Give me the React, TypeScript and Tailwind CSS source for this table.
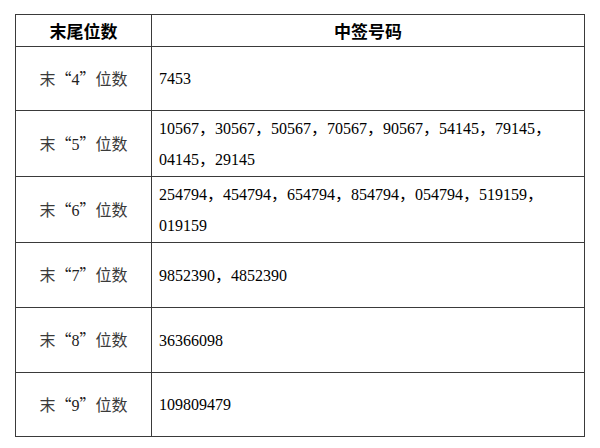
import React from "react";

interface Row {
  digit: string;
  numbers: string;
  height: string;
}

const rows: Row[] = [
  { digit: "4", numbers: "7453", height: "h-[64px]" },
  {
    digit: "5",
    numbers: "10567，30567，50567，70567，90567，54145，79145，04145，29145",
    height: "h-[66px]",
  },
  {
    digit: "6",
    numbers: "254794，454794，654794，854794，054794，519159，019159",
    height: "h-[66px]",
  },
  { digit: "7", numbers: "9852390，4852390", height: "h-[65px]" },
  { digit: "8", numbers: "36366098", height: "h-[65px]" },
  { digit: "9", numbers: "109809479", height: "h-[64px]" },
];

const serif = "font-['Liberation_Serif','Noto_Sans_CJK_SC',serif]";
const cjk = "font-['Noto_Sans_CJK_SC',sans-serif]";

export default function App() {
  return (
    <div className="w-[600px] h-[448px] bg-white pt-[14px] pl-[15px]">
      <table className="w-[570px] border-collapse table-fixed">
        <colgroup>
          <col className="w-[136px]" />
          <col />
        </colgroup>
        <thead>
          <tr className="h-[32px]">
            <th className={`border border-[#3a3a3a] text-[17px] font-bold text-center text-black ${cjk}`}>
              末尾位数
            </th>
            <th className={`border border-[#3a3a3a] text-[17px] font-bold text-center text-black ${cjk}`}>
              中签号码
            </th>
          </tr>
        </thead>
        <tbody>
          {rows.map((r) => (
            <tr key={r.digit} className={r.height}>
              <td className={`border border-[#3a3a3a] text-center text-[16px] text-[#3a3a3a] ${cjk}`}>
                <span>末</span>
                <span className="text-[#222]">“</span>
                <span className={`text-[#222] ${serif}`}>{r.digit}</span>
                <span className="text-[#222]">”</span>
                <span>位数</span>
              </td>
              <td
                className={`border border-[#3a3a3a] pl-[7px] pr-1 text-[16px] leading-[31px] align-middle text-black ${serif}`}
              >
                {r.numbers}
              </td>
            </tr>
          ))}
        </tbody>
      </table>
    </div>
  );
}
